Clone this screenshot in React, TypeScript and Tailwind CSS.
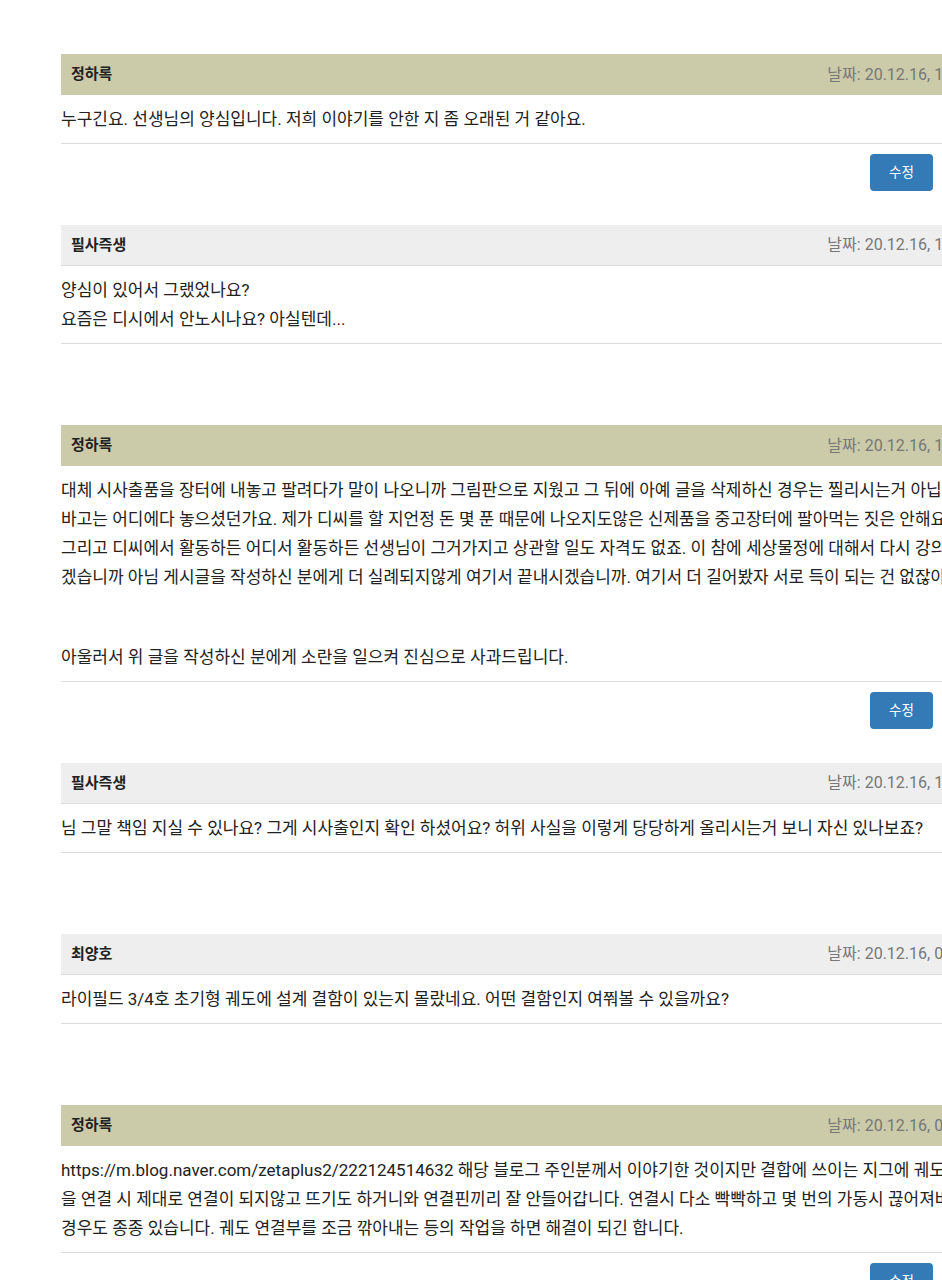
import React from "react";

type C = {
  name: string;
  date: string;
  mine: boolean;
  lines: (string | null)[];
  button: boolean;
};

const comments: C[] = [
  {
    name: "정하록",
    date: "날짜: 20.12.16, 14:52",
    mine: true,
    lines: ["누구긴요. 선생님의 양심입니다. 저희 이야기를 안한 지 좀 오래된 거 같아요."],
    button: true,
  },
  {
    name: "필사즉생",
    date: "날짜: 20.12.16, 14:31",
    mine: false,
    lines: ["양심이 있어서 그랬었나요?", "요즘은 디시에서 안노시나요? 아실텐데..."],
    button: false,
  },
  {
    name: "정하록",
    date: "날짜: 20.12.16, 14:20",
    mine: true,
    lines: [
      "대체 시사출품을 장터에 내놓고 팔려다가 말이 나오니까 그림판으로 지웠고 그 뒤에 아예 글을 삭제하신 경우는 찔리시는거 아닙니까? 출품",
      "바고는 어디에다 놓으셨던가요. 제가 디씨를 할 지언정 돈 몇 푼 때문에 나오지도않은 신제품을 중고장터에 팔아먹는 짓은 안해요.",
      "그리고 디씨에서 활동하든 어디서 활동하든 선생님이 그거가지고 상관할 일도 자격도 없죠. 이 참에 세상물정에 대해서 다시 강의",
      "겠습니까 아님 게시글을 작성하신 분에게 더 실례되지않게 여기서 끝내시겠습니까. 여기서 더 길어봤자 서로 득이 되는 건 없잖아요.",
      null,
      "아울러서 위 글을 작성하신 분에게 소란을 일으켜 진심으로 사과드립니다.",
    ],
    button: true,
  },
  {
    name: "필사즉생",
    date: "날짜: 20.12.16, 13:58",
    mine: false,
    lines: [
      "님 그말 책임 지실 수 있나요? 그게 시사출인지 확인 하셨어요? 허위 사실을 이렇게 당당하게 올리시는거 보니 자신 있나보죠?",
    ],
    button: false,
  },
  {
    name: "최양호",
    date: "날짜: 20.12.16, 09:47",
    mine: false,
    lines: [
      "라이필드 3/4호 초기형 궤도에 설계 결함이 있는지 몰랐네요. 어떤 결함인지 여쭤볼 수 있을까요?",
    ],
    button: false,
  },
  {
    name: "정하록",
    date: "날짜: 20.12.16, 09:12",
    mine: true,
    lines: [
      "https://m.blog.naver.com/zetaplus2/222124514632 해당 블로그 주인분께서 이야기한 것이지만 결합에 쓰이는 지그에 궤도",
      "을 연결 시 제대로 연결이 되지않고 뜨기도 하거니와 연결핀끼리 잘 안들어갑니다. 연결시 다소 빡빡하고 몇 번의 가동시 끊어져버리는",
      "경우도 종종 있습니다. 궤도 연결부를 조금 깎아내는 등의 작업을 하면 해결이 되긴 합니다.",
    ],
    button: true,
  },
];

function Comment({ c }: { c: C }) {
  return (
    <div className="mb-[34px]">
      <div
        className={
          c.mine
            ? "flex h-[41px] items-center justify-between bg-[#cbcaa9] pl-[10px] pr-[10px]"
            : "flex h-[41px] items-center justify-between border-b border-[#dddddd] bg-[#eeeeee] pl-[10px] pr-[10px]"
        }
      >
        <span className="text-[15px] font-bold text-[#222]">{c.name}</span>
        <span className="text-[16px] text-[#777]">{c.date}</span>
      </div>
      <div className="border-b border-[#dddddd] py-[9.5px] text-[17px] leading-[29px] text-[#222]">
        {c.lines.map((l, i) =>
          l === null ? (
            <div key={i} className="h-[51px]" />
          ) : (
            <div key={i} className="whitespace-nowrap">
              {l}
            </div>
          )
        )}
      </div>
      <div className="flex h-[47px] justify-end pr-[51px] pt-[10px]">
        {c.button && (
          <button className="h-[37px] w-[63px] rounded-[4px] bg-[#337ab7] text-[13.5px] text-white">
            수정
          </button>
        )}
      </div>
    </div>
  );
}

export default function App() {
  return (
    <div
      className="h-[1280px] w-[942px] overflow-hidden bg-white"
      style={{ fontFamily: 'Roboto, "Noto Sans CJK KR", sans-serif' }}
    >
      <div className="w-[984px] pl-[61px] pt-[54px]">
        {comments.map((c, i) => (
          <Comment key={i} c={c} />
        ))}
      </div>
    </div>
  );
}
